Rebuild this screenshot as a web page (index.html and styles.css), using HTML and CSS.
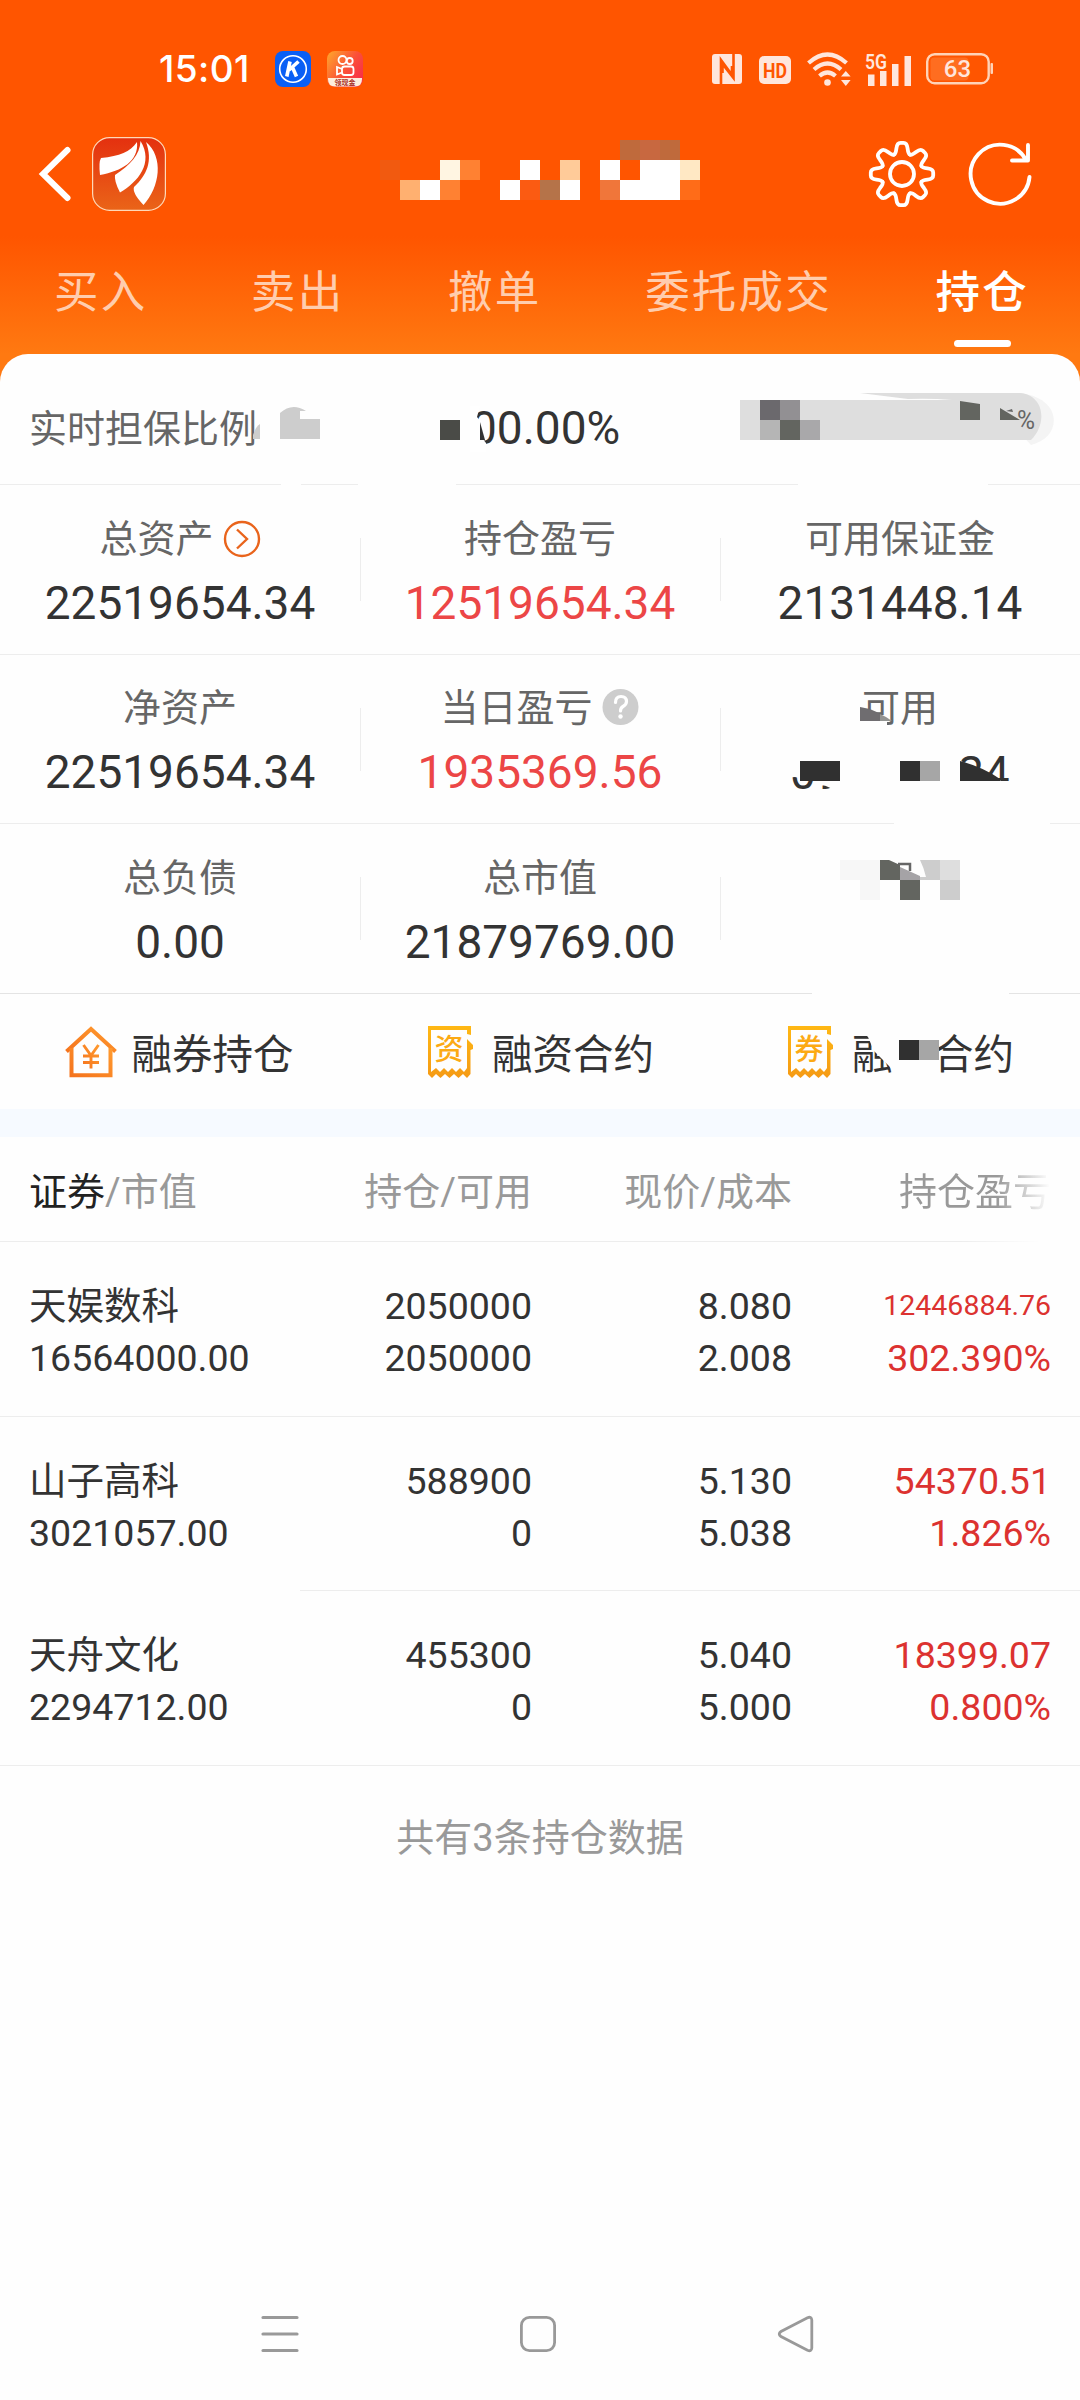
FILE: index.html
```html
<!DOCTYPE html>
<html lang="zh-CN">
<head>
  <meta charset="UTF-8">
  <meta name="viewport" content="width=device-width, initial-scale=1.0">
  <title>持仓</title>
  <link rel="stylesheet" href="styles.css">
</head>
<body>

<div class="top">
  <!-- Status bar -->
  <div class="status-bar">
    <span class="time">15:01</span>
    <svg class="app-k" width="36" height="36" viewBox="0 0 36 36">
      <rect width="36" height="36" rx="8" fill="#0a5ff5"/>
      <circle cx="18" cy="18" r="13.3" fill="none" stroke="#fff" stroke-width="1.6"/>
      <path d="M15 10.5L11.8 25.5M23.5 10.5L14 19M17.5 16.5L21.5 25.5" fill="none" stroke="#fff" stroke-width="3.6"/>
    </svg>
    <svg class="app-ks" width="36" height="36" viewBox="0 0 36 36">
      <defs>
        <linearGradient id="ks" x1="0" y1="0" x2="1" y2="0.7">
          <stop offset="0" stop-color="#ffa92b"/>
          <stop offset="0.6" stop-color="#fb5038"/>
          <stop offset="1" stop-color="#f83048"/>
        </linearGradient>
      </defs>
      <rect width="36" height="36" rx="8" fill="url(#ks)"/>
      <path d="M1 27H35V28Q35 35.500 28 35.500H8Q1 35.500 1 28Z" fill="#fdeedd"/>
      <g fill="none" stroke="#fff" stroke-width="1.800">
        <circle cx="15.500" cy="9" r="4"/>
        <circle cx="22.700" cy="10" r="3"/>
        <rect x="15" y="15.500" width="11.500" height="8.500" rx="2.500"/>
        <path d="M15 18L10 16V23.500L15 21.500"/>
      </g>
      <text x="18" y="34" font-size="7" font-weight="700" text-anchor="middle" fill="#a83028">领现金</text>
    </svg>

    <div class="status-right">
      <svg class="nfc" width="30" height="30" viewBox="0 0 30 30">
        <rect width="30" height="30" rx="3" fill="#ffe6dc"/>
        <path d="M9 30V6L20 21V12M21.500 0V24L10.500 10V19" fill="none" stroke="#ff5500" stroke-width="2.600"/>
      </svg>
      <svg class="hd" width="32" height="28" viewBox="0 0 32 28">
        <rect width="32" height="28" rx="5" fill="#ffe6dc"/>
        <text x="16" y="21.500" font-size="20.500" font-weight="700" text-anchor="middle" textLength="24" lengthAdjust="spacingAndGlyphs" fill="#ff5500">HD</text>
      </svg>
      <svg class="wifi" width="44" height="34" viewBox="0 0 44 34">
        <g fill="none" stroke="#ffe6dc" stroke-width="4.200">
          <path d="M1.500 11Q20.500 -6 39.500 11"/>
          <path d="M7 17.500Q20.500 5.500 34 17.500"/>
          <path d="M12.500 24Q20.500 17 28.500 24"/>
        </g>
        <circle cx="20.500" cy="30.500" r="3.300" fill="#ffe6dc"/>
        <path d="M34 24.500L38.800 19L43.600 24.500ZM34 28L38.800 34L43.600 28Z" fill="#ffe6dc"/>
      </svg>
      <svg class="signal" width="46" height="34" viewBox="0 0 46 34">
        <text x="0" y="17" font-size="20" font-weight="600" textLength="22" lengthAdjust="spacingAndGlyphs" fill="#ffe6dc">5G</text>
        <path d="M3 22.500h6.500V34H3zM15 19h6.500V34H15zM27 12h6.500V34H27zM39.500 4H46V34H39.500z" fill="#ffe6dc"/>
      </svg>
      <svg class="battery" width="68" height="32" viewBox="0 0 68 32">
        <rect x="4.500" y="4.500" width="38" height="23" rx="4" fill="#ff6d20"/>
        <rect x="1.200" y="1.200" width="61.500" height="29" rx="7.500" fill="none" stroke="#ffd3b8" stroke-width="2.400"/>
        <rect x="64.500" y="10" width="2.500" height="11" rx="1" fill="#ffd3b8"/>
        <text x="31.500" y="24.300" font-size="24" font-weight="500" text-anchor="middle" fill="#ffe6dc">63</text>
      </svg>
    </div>
  </div>

  <!-- Title bar -->
  <div class="title-bar">
    <svg class="back" width="32" height="54" viewBox="0 0 32 54">
      <path d="M28.500 3L4 27L28.500 51" fill="none" stroke="#fff" stroke-width="6" stroke-linecap="round"/>
    </svg>
    <svg class="logo" width="74" height="74" viewBox="0 0 74 74">
      <defs>
        <linearGradient id="lg" x1="0" y1="0" x2="0" y2="1">
          <stop offset="0" stop-color="#e4300f"/>
          <stop offset="1" stop-color="#ea6418"/>
        </linearGradient>
      </defs>
      <rect x="0.600" y="0.600" width="72.800" height="72.800" rx="17" fill="url(#lg)" stroke="#ffd9b8" stroke-width="1.200"/>
      <g fill="#fff">
        <path d="M45 5C38 15 28 19 9 21Q6.500 25 8 38C30 34 47 24 45 5Z"/>
        <path d="M48.500 4C48 18 38 28 23 38Q22 44 28 55.500C46 45 62 26 48.500 4Z"/>
        <path d="M54 5C61 24 55 38 42 50Q40 56 51.500 68C68 50 72 20 54 5Z"/>
      </g>
    </svg>
    <svg class="name" width="320" height="60" viewBox="0 0 320 60" shape-rendering="crispEdges">
      <path d="M0 20h20v20H0z" fill="#f15a10"/>
      <path d="M20 40h20v20H20z" fill="#ffb070"/>
      <path d="M40 40h20v20H40zM140 20h20v20H140zM120 40h20v20H120zM180 40h20v20H180zM220 20h20v20H220zM240 40h20V20h40v40H240z" fill="#fff"/>
      <path d="M60 20h20v20H60z" fill="#fff5e2"/>
      <path d="M80 20h20v20H80zM60 40h20v20H60z" fill="#ff8132"/>
      <path d="M180 20h20v20H180z" fill="#ffcb99"/>
      <path d="M140 40h20v20H140z" fill="#fb5b12"/>
      <path d="M160 40h20v20H160z" fill="#b57349"/>
      <path d="M240 0h60v20H240z" fill="#bf6a3c"/>
      <path d="M260 0h20v20H260z" fill="#c86840"/>
      <path d="M220 40h20v20H220z" fill="#f0763a"/>
      <path d="M300 20h20v20H300z" fill="#ffe8c4"/>
      <path d="M300 40h20v20H300z" fill="#ff6c18"/>
    </svg>
    <svg class="gear" width="68" height="68" viewBox="-34 -34 68 68">
      <defs>
        <path id="tooth" d="M-8 -19.400C-6.200 -20.200 -6 -22 -5.600 -25.500Q-5 -31.200 -1.500 -31.200H1.500Q5 -31.200 5.600 -25.500C6 -22 6.200 -20.200 8 -19.400"/>
      </defs>
      <g fill="none" stroke="#fff" stroke-width="3.800" stroke-linecap="round">
        <circle r="12"/>
        <use href="#tooth"/>
        <use href="#tooth" transform="rotate(45)"/>
        <use href="#tooth" transform="rotate(90)"/>
        <use href="#tooth" transform="rotate(135)"/>
        <use href="#tooth" transform="rotate(180)"/>
        <use href="#tooth" transform="rotate(225)"/>
        <use href="#tooth" transform="rotate(270)"/>
        <use href="#tooth" transform="rotate(315)"/>
      </g>
    </svg>
    <svg class="refresh" width="66" height="66" viewBox="-33 -33 66 66">
      <path d="M29.500 3A29.500 29.500 0 1 1 26 -14M28 -29V-13.500H12" fill="none" stroke="#fff" stroke-width="3.900" stroke-linecap="round" stroke-linejoin="round"/>
    </svg>
  </div>

  <nav class="tabs">
    <span class="tab">买入</span>
    <span class="tab">卖出</span>
    <span class="tab">撤单</span>
    <span class="tab">委托成交</span>
    <span class="tab active">持仓</span>
  </nav>
</div>

<main class="card">
  <div class="ratio">
    <span class="ratio-label">实时担保比例</span>
    <svg class="ratio-mark" width="68" height="36" viewBox="0 0 68 36">
      <path d="M1 33V29Q4 20 8 18V33Z" fill="#cdcdcd"/>
      <path d="M28 33V7Q40 -4 54 5H48V13H68V33Z" fill="#cdcdcd"/>
    </svg>
    <span class="ratio-value">00.00%
      <svg class="ratio-mask" width="60" height="46" viewBox="0 0 60 46">
        <path d="M30 0H40L37 11L42 17V32L46 37V46H30Z" fill="#fff"/>
        <path d="M0 14h20v20H0z" fill="#4a4b47"/>
        <path d="M40 16L45 34H40Z" fill="#333"/>
      </svg>
    </span>
    <svg class="pill" width="312" height="54" viewBox="0 0 312 54">
      <path d="M270 0C322 -2 326 44 291 52L280 40Z" fill="#f4f4f4"/>
      <path d="M0 7H212Q190 5 168 6L120 0H280C304 2 308 30 291 47H0Z" fill="#dedede"/>
      <path d="M20 7h20v20H20z" fill="#6b696d"/>
      <path d="M40 7h20v20H40z" fill="#929093"/>
      <path d="M20 27h20v20H20z" fill="#b5b5b5"/>
      <path d="M40 27h20v20H40z" fill="#636560"/>
      <path d="M60 27h20v20H60z" fill="#a9a8aa"/>
      <path d="M220 8L240 11V27H220zM260 15L280 27H260z" fill="#636560"/>
      <path d="M266 18L272 16L273 19Z" fill="#666"/>
      <text x="277" y="35.500" font-size="26" textLength="18" lengthAdjust="spacingAndGlyphs" fill="#666">%</text>
    </svg>
    <i class="line line-a"></i>
  </div>

  <div class="stats">
    <div class="stat">
      <div class="label">总资产
        <svg width="38" height="38" viewBox="0 0 38 38" fill="none" stroke="#e9641c" stroke-width="2.400">
          <circle cx="19" cy="19" r="17"/>
          <path d="M14 9.500L24 19L14 28.500"/>
        </svg>
      </div>
      <div class="num">22519654.34</div>
    </div>
    <div class="stat">
      <div class="label">持仓盈亏</div>
      <div class="num red">12519654.34</div>
    </div>
    <div class="stat">
      <div class="label">可用保证金</div>
      <div class="num">2131448.14</div>
    </div>
    <i class="line"></i>
  </div>

  <div class="stats stats-day">
    <div class="stat">
      <div class="label">净资产</div>
      <div class="num">22519654.34</div>
    </div>
    <div class="stat">
      <div class="label">当日盈亏
        <svg width="38" height="38" viewBox="0 0 38 38">
          <circle cx="18.500" cy="18" r="18" fill="#cdcdcd"/>
          <path d="M13.500 13.500Q13.500 7.500 19 7.500Q24.500 7.500 24.500 12.500Q24.500 15.500 21 17.500Q18.500 19 18.500 22" fill="none" stroke="#fff" stroke-width="3.200" stroke-linecap="round"/>
          <circle cx="18.500" cy="27.500" r="2.200" fill="#fff"/>
        </svg>
      </div>
      <div class="num red">1935369.56</div>
    </div>
    <div class="stat">
      <div class="label">可用</div>
      <svg class="hidden-num" width="230" height="110" viewBox="0 0 230 110">
        <defs>
          <clipPath id="low"><path d="M0 81L10 80L22 83H34V86L50 93V100H0Z"/></clipPath>
          <clipPath id="high"><path d="M168 50H230V84H216L172 62Z"/></clipPath>
        </defs>
        <!-- left part of the label -->
        <path d="M68 0H74V28L102 24V34H68Z" fill="#fefefe"/>
        <path d="M75 10Q88 12 95 17V24H75Z" fill="#6f6d70"/>
        <path d="M95 17Q102 20 107 24H95Z" fill="#929492"/>
        <g font-size="46" fill="#333">
          <text x="5" y="92" clip-path="url(#low)">09</text>
          <text x="173" y="92" clip-path="url(#high)">24</text>
        </g>
        <path d="M15 64h40v20H15zM115 64h20v20H115zM175 64Q198 70 215 82V84H175z" fill="#303030"/>
        <path d="M135 64h20v20H135z" fill="#a6a6a6"/>
      </svg>
    </div>
    <i class="line line-b"></i>
  </div>

  <div class="stats">
    <div class="stat">
      <div class="label">总负债</div>
      <div class="num">0.00</div>
    </div>
    <div class="stat">
      <div class="label">总市值</div>
      <div class="num">21879769.00</div>
    </div>
    <div class="stat">
      <svg class="mosaic" width="120" height="40" viewBox="0 0 120 40">
        <path d="M0 0h40v40H20V20H0z" fill="#f7f7f7"/>
        <path d="M40 0H49L60 5V20H40zM60 20h20v20H60z" fill="#636560"/>
        <path d="M58 4H70V11" fill="none" stroke="#666" stroke-width="2.500"/>
        <path d="M60 7L80 16V20H60z" fill="#a5a3a6"/>
        <path d="M80 0H100V20H80V17H86Q84 8 80 0zM100 20h20v20H100z" fill="#cdcdcd"/>
        <path d="M100 0h20v20H100z" fill="#dedede"/>
      </svg>
    </div>
    <i class="line line-c"></i>
  </div>

  <div class="links">
    <div class="link">
      <svg class="house" width="52" height="52" viewBox="0 0 52 52">
        <defs>
          <linearGradient id="hg" x1="1" y1="0" x2="0" y2="1">
            <stop offset="0" stop-color="#ff9a2e"/>
            <stop offset="1" stop-color="#f5741d"/>
          </linearGradient>
        </defs>
        <g fill="none" stroke="url(#hg)">
          <path d="M1.500 25.500L26 3L50.500 25.500" stroke-width="4"/>
          <path d="M6.500 22V49.200H45.500V22" stroke-width="4"/>
          <path d="M18.500 19L26 29.500L33.500 19M26 29.500V42.500M18 30H34M18 36.500H34" stroke-width="2.900"/>
        </g>
      </svg>
      <span>融券持仓</span>
    </div>
    <div class="link">
      <svg class="ticket" width="45" height="52" viewBox="0 0 45 52">
        <defs>
          <linearGradient id="tg" x1="0" y1="0" x2="0" y2="1">
            <stop offset="0" stop-color="#ffb814"/>
            <stop offset="1" stop-color="#f59a14"/>
          </linearGradient>
        </defs>
        <path fill="url(#tg)" fill-rule="evenodd" d="M0 0H43V9L39 8V4H3V46L8 42L12 46L16 42L20 46L24 42L28 46L32 42L36 46L39 42V13L45 19V23L42.500 24V48L39 52L35 48L30.500 52L26 48L21.500 52L17 48L12.500 52L8 48L4 52L0 48Z"/>
        <text x="21" y="33.500" font-size="29" font-weight="500" text-anchor="middle" fill="#fcaa14">资</text>
      </svg>
      <span>融资合约</span>
    </div>
    <div class="link">
      <svg class="ticket" width="45" height="52" viewBox="0 0 45 52">
        <path fill="url(#tg)" fill-rule="evenodd" d="M0 0H43V9L39 8V4H3V46L8 42L12 46L16 42L20 46L24 42L28 46L32 42L36 46L39 42V13L45 19V23L42.500 24V48L39 52L35 48L30.500 52L26 48L21.500 52L17 48L12.500 52L8 48L4 52L0 48Z"/>
        <text x="21" y="33.500" font-size="29" font-weight="500" text-anchor="middle" fill="#fcaa14">券</text>
      </svg>
      <span class="covered">融券合约
        <svg width="90" height="50" viewBox="0 0 90 50">
          <path d="M8 0H86V46H44L38 38L30 30L22 22L16 8Z" fill="#fefefe"/>
          <path d="M47 11h20v20H47z" fill="#303030"/>
          <path d="M67 11h20v20H67z" fill="#a6a6a6"/>
        </svg>
      </span>
    </div>
  </div>

  <!-- Positions -->
  <div class="thead">
    <span><b>证券</b>/市值</span>
    <span>持仓/可用</span>
    <span>现价/成本</span>
    <span class="fade">持仓盈亏</span>
    <i class="line line-d"></i>
  </div>

  <div class="row">
    <div>天娱数科<br>16564000.00</div>
    <div>2050000<br>2050000</div>
    <div>8.080<br>2.008</div>
    <div class="gain"><small>12446884.76</small><br>302.390%</div>
    <i class="line"></i>
  </div>
  <div class="row">
    <div>山子高科<br>3021057.00</div>
    <div>588900<br>0</div>
    <div>5.130<br>5.038</div>
    <div class="gain">54370.51<br>1.826%</div>
    <i class="line line-e"></i>
  </div>
  <div class="row">
    <div>天舟文化<br>2294712.00</div>
    <div>455300<br>0</div>
    <div>5.040<br>5.000</div>
    <div class="gain">18399.07<br>0.800%</div>
    <i class="line"></i>
  </div>

  <p class="total">共有3条持仓数据</p>
</main>

<footer class="nav">
  <svg width="38" height="38" viewBox="0 0 38 38" stroke="#999" stroke-width="3.200" stroke-linecap="round">
    <path d="M2 2.500H36M2 19H36M2 35.500H36"/>
  </svg>
  <svg width="38" height="38" viewBox="0 0 38 38" fill="none" stroke="#999" stroke-width="2.800">
    <rect x="2.400" y="2.400" width="33.200" height="33.200" rx="8"/>
  </svg>
  <svg width="38" height="38" viewBox="0 0 38 38" fill="none" stroke="#999" stroke-width="2.800">
    <path d="M30.500 2.800Q34.500 1 34.800 5V33Q34.500 37 30.500 35.200L4 21.500Q0.500 19 4 16.500Z"/>
  </svg>
</footer>

</body>
</html>
```
FILE: styles.css
```css
* {
  box-sizing: border-box;
}

body {
  margin: 0;
  width: 1080px;
  height: 2400px;
  display: flex;
  flex-direction: column;
  background: #fefefe;
  color: #333;
  font-family: Roboto, "Noto Sans CJK SC", sans-serif;
  font-size: 38px;
  overflow: hidden;
}

svg {
  display: block;
  flex: none;
  overflow: visible;
}

/* orange top */
.top {
  height: 384px;
  flex: none;
  background: linear-gradient(180deg, #ff5500 0, #ff5500 236px, #ff7911 354px, #ff7911 100%);
}

.status-bar {
  display: flex;
  align-items: center;
  height: 110px;
  padding: 27px 86px 0 159px;
}

.time {
  width: 116px;
  font-family: Inter, Roboto, sans-serif;
  font-size: 37px;
  font-weight: 500;
  letter-spacing: 0.4px;
  color: #fff;
}

.app-ks {
  margin-left: 16px;
}

.status-right {
  display: flex;
  align-items: center;
  margin-left: auto;
}

.hd {
  margin-left: 17px;
  margin-top: 2px;
}

.wifi {
  margin-left: 16px;
}

.signal {
  margin-left: 14px;
}

.battery {
  margin-left: 15px;
}

.title-bar {
  display: flex;
  align-items: center;
  height: 127px;
  padding: 0 47px 0 39px;
}

.logo {
  margin-left: 21px;
}

.name {
  margin-left: 214px;
  margin-top: -7px;
}

.gear {
  margin-left: 168px;
}

.refresh {
  margin-left: 31px;
}

.tabs {
  display: flex;
  justify-content: space-between;
  padding: 0 51px 0 54px;
}

.tab {
  height: 112px;
  line-height: 112px;
  font-size: 44.5px;
  letter-spacing: 2.2px;
  color: #ffcdae;
}

.tab.active {
  display: flex;
  flex-direction: column;
  align-items: center;
  font-weight: 500;
  color: #fff;
}

.tab.active::after {
  content: "";
  width: 57px;
  height: 7px;
  margin-top: -9px;
  border-radius: 4px;
  background: #fff;
}

/* account card */
.card {
  flex: 1;
  margin-top: -30px;
  border-radius: 28px 28px 0 0;
  background: #fefefe;
}

.line {
  position: absolute;
  left: 0;
  right: 0;
  bottom: 0;
  height: 1px;
  background: #ededed;
}

.line-a {
  background: linear-gradient(90deg, #ededed 281px, transparent 281px 301px, #ededed 301px 358px, transparent 358px 456px, #ededed 456px 798px, transparent 798px 988px, #ededed 988px);
}

.line-b {
  background: linear-gradient(90deg, #ededed 894px, transparent 894px 1050px, #ededed 1050px);
}

.line-c {
  background: linear-gradient(90deg, #e4e4e4 812px, transparent 812px 1009px, #e4e4e4 1009px);
}

.line-d {
  background: linear-gradient(90deg, #ededed 960px, transparent 1040px);
}

.line-e {
  left: 300px;
}

.ratio {
  position: relative;
  display: flex;
  align-items: center;
  height: 131px;
  padding: 14px 28px 0 29px;
}

.ratio-label {
  margin-top: -3px;
  color: #666;
}

.ratio-mark {
  margin-left: -5px;
  margin-top: -6px;
}

.ratio-value {
  position: relative;
  margin-left: 151px;
  margin-top: 2px;
  font-size: 46px;
}

.ratio-mask {
  position: absolute;
  left: -31px;
  top: 5px;
}

.pill {
  margin-left: auto;
  margin-top: -13px;
}

.stats {
  position: relative;
  display: flex;
  height: 169.7px;
}

.stat {
  position: relative;
  width: 360px;
  padding-top: 26px;
  text-align: center;
}

.stats-day .stat {
  padding-top: 25px;
}

.stat + .stat::before {
  content: "";
  position: absolute;
  left: 0;
  top: 53px;
  width: 1px;
  height: 63px;
  background: #ededed;
}

.label {
  display: flex;
  justify-content: center;
  align-items: center;
  gap: 9px;
  height: 56px;
  line-height: 56px;
  color: #666;
}

.num {
  margin-top: 6px;
  line-height: 60px;
  font-size: 46px;
}

.red {
  color: #ec4646;
}

.hidden-num {
  position: absolute;
  left: 65px;
  top: 42px;
}

.mosaic {
  margin: 10px auto 0;
}

.links {
  display: flex;
  height: 143px;
  border-bottom: 28px solid #f6faff;
}

.link {
  display: flex;
  justify-content: center;
  align-items: center;
  width: 360px;
  font-size: 40.5px;
}

.house {
  margin-left: -2px;
  margin-right: 15px;
}

.ticket {
  margin-left: 2px;
  margin-right: 19px;
}

.covered {
  position: relative;
}

.covered svg {
  position: absolute;
  left: 0;
  top: 7px;
}

/* positions table */
.thead,
.row {
  position: relative;
  display: grid;
  grid-template-columns: 273px 230px 260px 259px;
  padding: 0 29px;
  text-align: right;
}

.thead {
  height: 105px;
  line-height: 110px;
  color: #999;
}

.thead b {
  font-weight: 400;
  color: #222;
}

.thead > :first-child,
.row > :first-child {
  text-align: left;
}

.fade {
  background: linear-gradient(90deg, #999 205px, transparent 258px);
  -webkit-background-clip: text;
  background-clip: text;
  color: transparent;
}

.row {
  height: 174.5px;
  padding-top: 38px;
  line-height: 52px;
  font-size: 37.5px;
}

.gain {
  color: #dc3230;
}

/* long amounts shrink, the line box stays 52px */
.gain small {
  display: inline-block;
  height: 52px;
  font-size: 28.5px;
  vertical-align: top;
}

.total {
  margin: 44px 0 0;
  line-height: 56px;
  text-align: center;
  color: #999;
}

.nav {
  display: flex;
  justify-content: center;
  gap: 220px;
  height: 85px;
  padding-right: 5px;
}
```
